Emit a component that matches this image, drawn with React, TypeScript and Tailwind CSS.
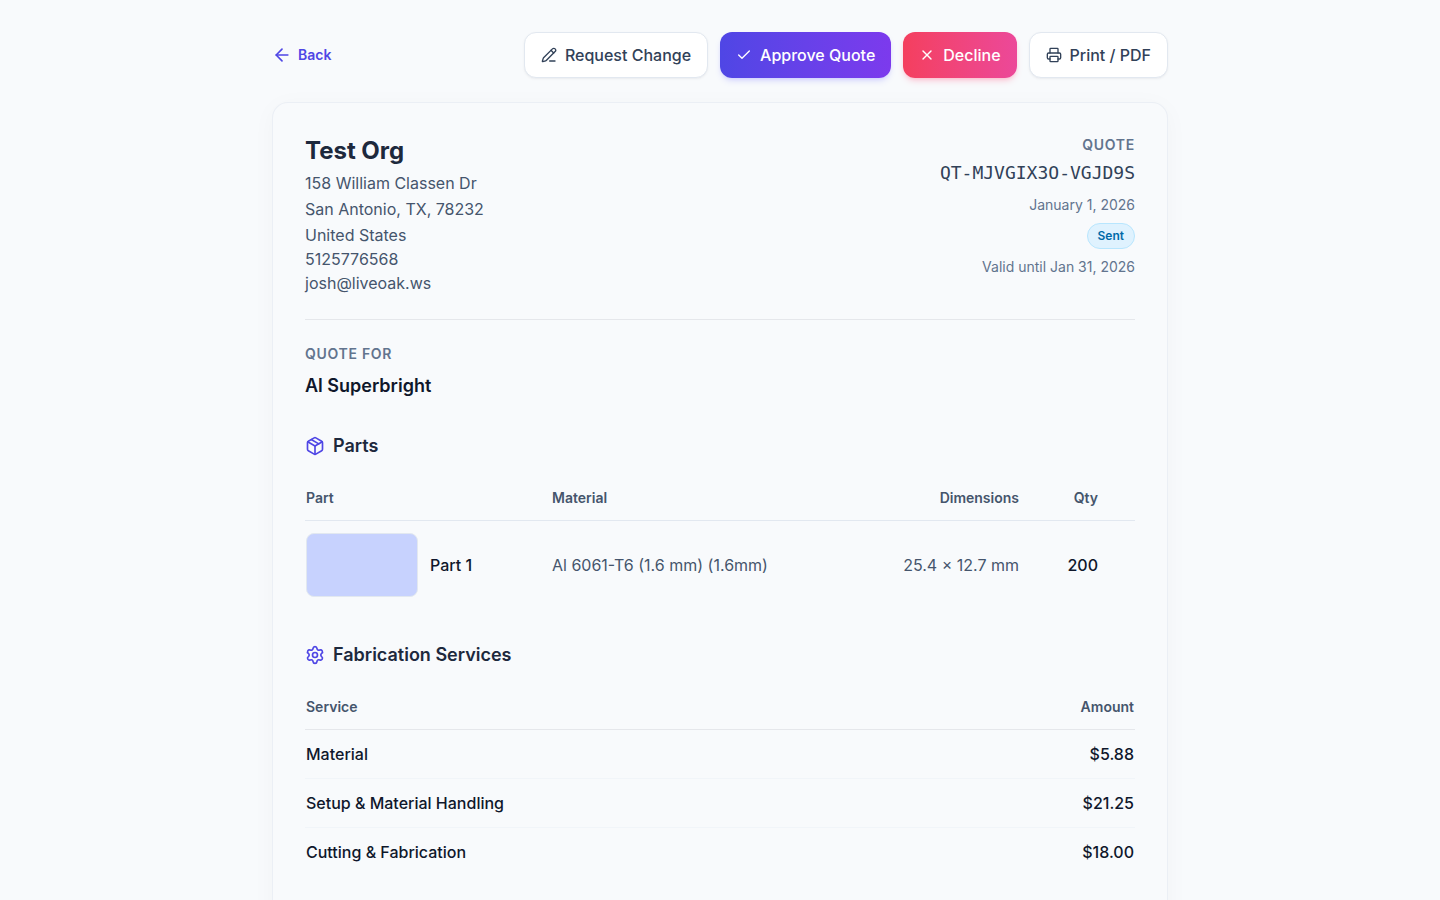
import { ArrowLeft, Check, Package, PencilLine, Printer, Settings, X } from 'lucide-react';
import clsx from 'clsx';

const org = {
  name: 'Test Org',
  address: ['158 William Classen Dr', 'San Antonio, TX, 78232', 'United States'],
  phone: '5125776568',
  email: 'josh@liveoak.ws',
};

const parts = [
  { name: 'Part 1', material: 'Al 6061-T6 (1.6 mm) (1.6mm)', dimensions: '25.4 × 12.7 mm', qty: 200 },
];

const services = [
  { name: 'Material', amount: 5.88 },
  { name: 'Setup & Material Handling', amount: 21.25 },
  { name: 'Cutting & Fabrication', amount: 18 },
];

export default function App() {
  return (
    <div className="min-h-screen bg-[#f8fafc] px-4 py-8 font-['Inter',sans-serif] text-base text-slate-900">
      <div className="max-w-4xl mx-auto">
        <Toolbar />
        <main className="rounded-2xl border border-slate-200/60 bg-[#f8fafc] p-8 shadow-[0_4px_24px_rgba(15,23,42,0.03)]">
          <QuoteHeader />
          <section className="pt-6 mb-8">
            <h2 className="text-sm font-semibold tracking-wider text-slate-500 mb-2">QUOTE FOR</h2>
            <p className="text-lg font-semibold">Al Superbright</p>
          </section>
          <PartsSection />
          <ServicesSection />
        </main>
      </div>
    </div>
  );
}

function Toolbar() {
  return (
    <div className="flex items-center justify-between mb-6">
      <a href="#" className="flex items-center gap-1.5 text-sm font-semibold text-[#4f46e5]">
        <ArrowLeft size={20} />
        Back
      </a>
      <div className="flex gap-3">
        <ActionButton icon={PencilLine} label="Request Change" />
        <ActionButton
          icon={Check}
          label="Approve Quote"
          className="bg-linear-to-r from-[#4f46e5] to-[#7c3aed] text-white shadow-md shadow-indigo-500/20"
        />
        <ActionButton
          icon={X}
          label="Decline"
          className="bg-linear-to-r from-[#f43f5e] to-[#ec4899] text-white shadow-md shadow-rose-500/20"
        />
        <ActionButton icon={Printer} label="Print / PDF" />
      </div>
    </div>
  );
}

function ActionButton({ icon: Icon, label, className }: any) {
  return (
    <button
      type="button"
      className={clsx(
        'flex items-center gap-2 rounded-xl px-4 py-2.5 font-medium cursor-pointer',
        className || 'border border-slate-200 bg-white text-slate-700 shadow-sm shadow-slate-900/5'
      )}
    >
      <Icon size={16} />
      {label}
    </button>
  );
}

function QuoteHeader() {
  return (
    <header className="flex items-start justify-between border-b border-gray-200 pb-6">
      <div className="text-slate-600">
        <h1 className="text-2xl font-bold text-slate-800 mb-1">{org.name}</h1>
        <address className="not-italic space-y-0.5">
          {org.address.map((line) => (
            <p key={line}>{line}</p>
          ))}
        </address>
        <p>{org.phone}</p>
        <p>{org.email}</p>
      </div>
      <div className="flex flex-col items-end text-sm text-slate-500">
        <p className="font-semibold tracking-wider">QUOTE</p>
        <p className="mt-1 font-['DejaVu_Sans_Mono',monospace] text-lg text-slate-700">QT-MJVGIX3O-VGJD9S</p>
        <p className="mt-2">January 1, 2026</p>
        <span className="my-2 rounded-full border border-sky-200 bg-sky-100 px-2.5 py-1 text-xs font-semibold text-sky-700">
          Sent
        </span>
        <p>Valid until Jan 31, 2026</p>
      </div>
    </header>
  );
}

function SectionTitle({ icon: Icon, children }: any) {
  return (
    <h2 className="flex items-center gap-2 text-lg font-semibold text-slate-800 mb-4">
      <Icon size={20} className="text-[#4f46e5]" />
      {children}
    </h2>
  );
}

function PartsSection() {
  return (
    <section className="mb-8">
      <SectionTitle icon={Package}>Parts</SectionTitle>
      <table className="w-full">
        <thead>
          <tr className="border-b border-slate-200 text-sm text-slate-600">
            <th className="w-[246px] px-px py-3 text-left font-semibold">Part</th>
            <th className="px-px py-3 text-left font-semibold">Material</th>
            <th className="px-px py-3 text-right font-semibold">Dimensions</th>
            <th className="w-[79px] px-px py-3 text-right font-semibold">Qty</th>
            <th className="w-9" aria-hidden="true"></th>
          </tr>
        </thead>
        <tbody>
          {parts.map((part) => (
            <tr key={part.name}>
              <td className="px-px py-3 font-medium">
                <div className="flex items-center gap-3">
                  <div className="w-28 h-16 rounded-lg border border-slate-200 bg-[#c7d2fe]" />
                  {part.name}
                </div>
              </td>
              <td className="px-px py-3 text-slate-600">{part.material}</td>
              <td className="px-px py-3 text-right text-slate-600">{part.dimensions}</td>
              <td className="px-px py-3 text-right font-medium">{part.qty}</td>
              <td></td>
            </tr>
          ))}
        </tbody>
      </table>
    </section>
  );
}

function ServicesSection() {
  return (
    <section className="mb-8">
      <SectionTitle icon={Settings}>Fabrication Services</SectionTitle>
      <table className="w-full">
        <thead>
          <tr className="border-b border-gray-200 text-sm text-slate-600">
            <th className="px-px py-3 text-left font-semibold">Service</th>
            <th className="px-px py-3 text-right font-semibold">Amount</th>
          </tr>
        </thead>
        <tbody className="divide-y divide-slate-100 font-medium">
          {services.map((service) => (
            <tr key={service.name}>
              <td className="px-px py-3">{service.name}</td>
              <td className="px-px py-3 text-right">${service.amount.toFixed(2)}</td>
            </tr>
          ))}
        </tbody>
      </table>
    </section>
  );
}
